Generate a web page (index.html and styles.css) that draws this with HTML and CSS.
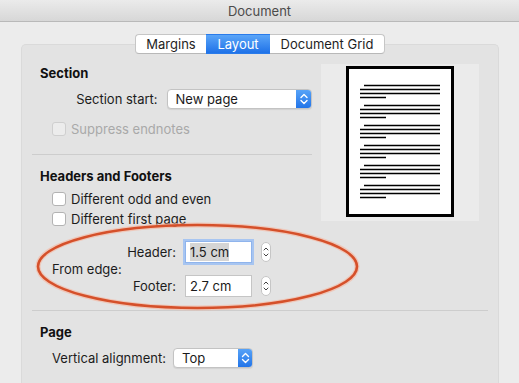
FILE: index.html
```html
<!DOCTYPE html>
<html>
<head>
<meta charset="utf-8">
<link rel="stylesheet" href="styles.css">
</head>
<body>
<div class="window">
  <div class="titlebar">Document</div>
  <div class="content">
    <div class="tabs">
      <span class="tab t-margins">Margins</span><span class="tab t-layout active">Layout</span><span class="tab t-grid">Document Grid</span>
    </div>
    <div class="panel">
      <div class="top">
        <div class="leftcol">
          <div class="group-title first">Section</div>
          <div class="row start-row">
            <span class="label start-label">Section start:</span>
            <div class="popup popup-wide">
              <span class="popup-text">New page</span>
              <span class="arrows"><svg width="16" height="20" viewBox="0 0 16 20"><path d="M5 8.5 L8 5.5 L11 8.5 M5 11.5 L8 14.5 L11 11.5" fill="none" stroke="#fff" stroke-width="1.4" stroke-linecap="round" stroke-linejoin="round"/></svg></span>
            </div>
          </div>
          <div class="check disabled check-suppress"><span class="box"></span>Suppress endnotes</div>
          <div class="sep sep-short"></div>
          <div class="group-title hf">Headers and Footers</div>
          <div class="check check-odd"><span class="box"></span>Different odd and even</div>
          <div class="check check-first"><span class="box"></span>Different first page</div>
        </div>
        <div class="preview">
          <div class="page">
            <svg width="102" height="145" viewBox="0 0 102 145">
              <g stroke="#000" stroke-width="1.5">
                <g id="grp">
                  <line x1="15" y1="16.5" x2="91" y2="16.5"/>
                  <line x1="11" y1="20.5" x2="91" y2="20.5"/>
                  <line x1="11" y1="24.5" x2="91" y2="24.5"/>
                  <line x1="11" y1="28.5" x2="37" y2="28.5"/>
                </g>
                <use href="#grp" y="20"/>
                <use href="#grp" y="40"/>
                <use href="#grp" y="60"/>
                <use href="#grp" y="80"/>
                <use href="#grp" y="100"/>
              </g>
            </svg>
          </div>
        </div>
      </div>
      <div class="edge">
        <span class="edge-label">From edge:</span>
        <div class="edge-rows">
          <div class="edge-row">
            <span class="lbl">Header:</span>
            <div class="field focus"><span class="sel">1.5 cm</span></div>
            <div class="stepper"><svg width="10" height="20" viewBox="0 0 10 20"><path d="M3 8 L5 6 L7 8 M3 12 L5 14 L7 12" fill="none" stroke="#444" stroke-width="1" stroke-linecap="round" stroke-linejoin="round"/></svg></div>
          </div>
          <div class="edge-row">
            <span class="lbl">Footer:</span>
            <div class="field">2.7 cm</div>
            <div class="stepper"><svg width="10" height="20" viewBox="0 0 10 20"><path d="M3 8 L5 6 L7 8 M3 12 L5 14 L7 12" fill="none" stroke="#444" stroke-width="1" stroke-linecap="round" stroke-linejoin="round"/></svg></div>
          </div>
        </div>
      </div>
      <div class="sep sep-long"></div>
      <div class="group-title pg">Page</div>
      <div class="row valign-row">
        <span class="label valign-label">Vertical alignment:</span>
        <div class="popup popup-narrow">
          <span class="popup-text">Top</span>
          <span class="arrows"><svg width="15" height="20" viewBox="0 0 15 20"><path d="M4.5 8.5 L7.5 5.5 L10.5 8.5 M4.5 11.5 L7.5 14.5 L10.5 11.5" fill="none" stroke="#fff" stroke-width="1.4" stroke-linecap="round" stroke-linejoin="round"/></svg></span>
        </div>
      </div>
    </div>
  </div>
  <svg class="annotation" width="519" height="383" viewBox="0 0 519 383">
    <ellipse cx="197.5" cy="266.5" rx="159.5" ry="41.5" fill="none" stroke="#f6b49c" stroke-width="5" opacity="0.6"/>
    <ellipse cx="197.5" cy="266.5" rx="159.5" ry="41.5" fill="none" stroke="#d5502a" stroke-width="2.6"/>
  </svg>
</div>
</body>
</html>
```

FILE: styles.css
```css
* { box-sizing: border-box; }
html, body { margin: 0; padding: 0; }
body {
  width: 519px;
  height: 383px;
  overflow: hidden;
  background: #ececec;
  font-family: "Inter", "Liberation Sans", sans-serif;
  font-size: 13px;
  color: #1c1c1c;
}
.window {
  position: relative;
  width: 519px;
  height: 383px;
  background: #ececec;
}
.titlebar {
  height: 22px;
  line-height: 22px;
  text-align: center;
  color: #4b4b4b;
  background: linear-gradient(#ebebeb, #d7d7d7);
  border-bottom: 1px solid #b9b9b9;
}
.content {
  padding: 12px 20px 0 21px;
}
.tabs {
  position: relative;
  z-index: 2;
  display: flex;
  justify-content: flex-start;
  margin-left: 114px;
  height: 20px;
}
.tab {
  height: 20px;
  line-height: 19px;
  text-align: center;
  background: #fff;
  border-top: 1px solid #c6c6c6;
  border-bottom: 1px solid #b8b8b8;
  color: #1e1e1e;
}
.t-margins { width: 71px; border-left: 1px solid #c6c6c6; border-radius: 4px 0 0 4px; }
.t-layout { width: 64px; }
.t-grid { width: 115px; border-right: 1px solid #c6c6c6; border-radius: 0 4px 4px 0; }
.tab.active {
  background: linear-gradient(#5aa5f8, #1f72e8);
  border-color: #2a7bea;
  color: #fff;
}
.panel {
  margin-top: -10px;
  height: 339px;
  background: #e3e3e3;
  border: 1px solid #dadada;
  border-bottom: none;
  border-radius: 5px 5px 0 0;
  padding: 19px 10px 0 10px;
}
.top {
  display: flex;
  align-items: flex-start;
}
.leftcol {
  width: 280px;
}
.group-title {
  font-weight: 700;
  line-height: 16px;
  padding-left: 8px;
  color: #111;
}
.group-title.first { margin-top: 1px; }
.group-title.hf { margin-top: 13px; }
.group-title.pg { margin-top: 13px; }
.row {
  display: flex;
  align-items: center;
  padding-left: 20px;
  height: 20px;
}
.start-row { margin-top: 8px; }
.label { white-space: nowrap; }
.start-label { width: 106px; text-align: right; margin-right: 9px; }
.valign-row { margin-top: 8px; }
.valign-label { width: 121px; }
.popup {
  display: flex;
  height: 20px;
  background: #fff;
  border: 1px solid #c3c3c3;
  border-radius: 4px;
  box-shadow: 0 1px 1px rgba(0,0,0,0.08);
  overflow: hidden;
}
.popup-wide { width: 146px; }
.popup-narrow { width: 80px; }
.popup-text {
  flex: 1;
  padding-left: 8px;
  line-height: 18px;
  color: #1a1a1a;
}
.arrows {
  width: 16px;
  height: 20px;
  margin-top: -1px;
  margin-right: -1px;
  background: linear-gradient(#5aa5f8, #1f72e8);
  border-radius: 0 4px 4px 0;
}
.popup-narrow .arrows { width: 15px; }
.arrows svg { display: block; }
.check {
  display: flex;
  align-items: center;
  height: 16px;
  padding-left: 20px;
  white-space: nowrap;
}
.check .box {
  width: 14px;
  height: 14px;
  margin-right: 5px;
  background: #fff;
  border: 1px solid #b3b3b3;
  border-radius: 3px;
}
.check.disabled { color: #a9a9a9; }
.check.disabled .box { background: #ececec; border-color: #cfcfcf; }
.check-suppress { margin-top: 12px; }
.check-odd { margin-top: 7px; }
.check-first { margin-top: 4px; }
.sep {
  height: 1px;
  background: #cdcdcd;
}
.sep-short { margin-top: 17px; width: 280px; }
.sep-long { margin-top: 12px; width: 456px; }
.preview {
  margin-left: 9px;
  width: 158px;
  height: 157px;
  background: #ebebeb;
  padding-top: 2px;
  display: flex;
  justify-content: center;
}
.page {
  width: 108px;
  height: 151px;
  background: #fff;
  border: 3px solid #000;
}
.page svg { display: block; }
.edge {
  display: flex;
  align-items: center;
  margin-top: 13px;
  padding-left: 20px;
}
.edge-label { width: 73px; white-space: nowrap; }
.edge-rows {
  display: flex;
  flex-direction: column;
  gap: 10px;
}
.edge-row {
  display: flex;
  align-items: center;
  height: 24px;
}
.lbl { width: 51px; text-align: right; margin-right: 9px; }
.field {
  width: 67px;
  height: 22px;
  line-height: 21px;
  background: #fff;
  border: 1px solid #c5c5c5;
  padding-left: 4px;
  color: #1a1a1a;
}
.field.focus {
  border-color: #8fb4ec;
  box-shadow: 0 0 0 2px #a7c5f1;
}
.sel { background: #d5d5d5; padding: 1px 0; }
.stepper {
  margin-left: 9px;
  width: 10px;
  height: 20px;
  background: #fff;
  border: 1px solid #c6c6c6;
  border-radius: 5px;
  display: flex;
  align-items: center;
  justify-content: center;
}
.stepper svg { display: block; margin: -1px; }
.annotation {
  position: absolute;
  left: 0;
  top: 0;
  pointer-events: none;
}
```
